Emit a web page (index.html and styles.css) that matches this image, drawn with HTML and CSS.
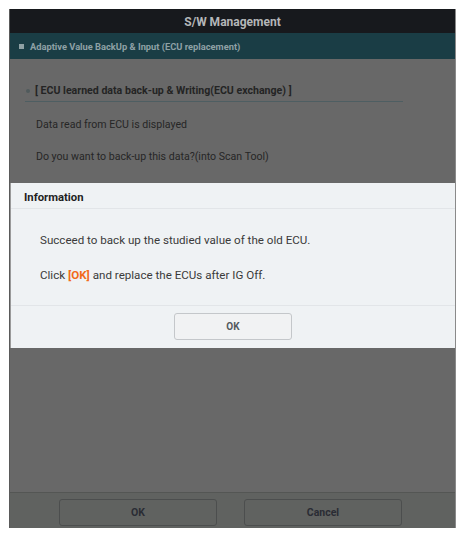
FILE: index.html
```html
<!DOCTYPE html>
<html>
<head>
<meta charset="utf-8">
<link rel="stylesheet" href="styles.css">
</head>
<body>
<div class="frame">
  <div class="titlebar">S/W Management</div>
  <div class="subbar"><span class="sq"></span>Adaptive Value BackUp &amp; Input (ECU replacement)</div>
  <div class="content">
    <div class="section-head"><span class="dot"></span>[ ECU learned data back-up &amp; Writing(ECU exchange) ]</div>
    <div class="line l1">Data read from ECU is displayed</div>
    <div class="line l2">Do you want to back-up this data?(into Scan Tool)</div>
    <div class="dialog">
      <div class="dlg-head">Information</div>
      <div class="dlg-body">
        <p>Succeed to back up the studied value of the old ECU.</p>
        <p>Click <b class="hl">[OK]</b> and replace the ECUs after IG Off.</p>
      </div>
      <div class="dlg-foot"><button class="dlg-btn">OK</button></div>
    </div>
  </div>
  <div class="bottombar">
    <button class="bbtn">OK</button>
    <button class="bbtn">Cancel</button>
  </div>
  <div class="strip"></div>
</div>
</body>
</html>
```
FILE: styles.css
```css
* { box-sizing: border-box; }
html, body { margin: 0; padding: 0; background: #ffffff; }
body { font-family: Roboto, "Liberation Sans", sans-serif; }
.frame {
  position: relative;
  margin: 9px 0 0 9px;
  width: 447px;
  height: 519px;
  display: flex;
  flex-direction: column;
  background: #686868;
  border-left: 1px solid #5a5a5a;
  border-right: 1px solid #8a8a8a;
}
.titlebar {
  height: 24px;
  background: #17191d;
  color: #b4b6b8;
  font-weight: bold;
  font-size: 12px;
  display: flex;
  align-items: center;
  justify-content: center;
  padding-top: 1px;
}
.subbar {
  height: 26px;
  background: #1a3d45;
  color: #8fa1a5;
  font-size: 9.3px;
  font-weight: bold;
  display: flex;
  align-items: center;
  padding-left: 9px;
  gap: 6px;
}
.sq { width: 5px; height: 5px; background: #8fa1a5; display: inline-block; }
.content {
  position: relative;
  flex: 1;
  background: #686868;
  padding: 24px 0 0 15px;
  color: #262626;
  font-size: 10.6px;
}
.section-head {
  width: 378px;
  height: 19px;
  border-bottom: 1px solid #4e5e62;
  font-weight: bold;
  display: flex;
  align-items: center;
  gap: 5px;
  padding-bottom: 3px;
  padding-left: 1px;
  color: #242424;
}
.dot { width: 4px; height: 4px; border-radius: 50%; background: #505a5c; display: inline-block; }
.line { padding-left: 11px; }
.l1 { margin-top: 16px; }
.l2 { margin-top: 19px; }
.dialog {
  position: absolute;
  left: 0;
  right: 0;
  top: 124px;
  height: 165px;
  background: #eff2f4;
  display: flex;
  flex-direction: column;
  border-left: 1px solid #9a9a9a;
}
.dlg-head {
  height: 26px;
  border-bottom: 1px solid #e2e5e8;
  font-weight: bold;
  font-size: 11.3px;
  color: #1e1e1e;
  display: flex;
  align-items: center;
  padding-left: 13px;
  padding-top: 3px;
}
.dlg-body {
  height: 96px;
  padding: 24px 0 0 29px;
  font-size: 11.6px;
  color: #3a3a3a;
}
.dlg-body p { margin: 0 0 21px 0; line-height: 14px; }
.hl { color: #f26a1b; }
.dlg-foot {
  flex: 1;
  border-top: 1px solid #e2e5e8;
  display: flex;
  justify-content: center;
  padding-top: 7px;
}
.dlg-btn {
  width: 118px;
  height: 27px;
  background: #f1f2f3;
  border: 1px solid #c4c7ca;
  border-radius: 3px;
  font-family: inherit;
  font-weight: bold;
  font-size: 10px;
  color: #555a5e;
}
.bottombar {
  height: 36px;
  background: #606260;
  border-top: 1px solid #545654;
  display: flex;
  gap: 27px;
  padding: 6px 0 0 49px;
}
.bbtn {
  width: 158px;
  height: 27px;
  background: #606260;
  border: 1px solid #4c4e4e;
  border-radius: 3px;
  font-family: inherit;
  font-weight: bold;
  font-size: 10.5px;
  color: #2a2c34;
}
.strip {
  position: absolute;
  left: 0;
  bottom: -1px;
  width: 29px;
  height: 1px;
  background: #3a2a6a;
}
```
